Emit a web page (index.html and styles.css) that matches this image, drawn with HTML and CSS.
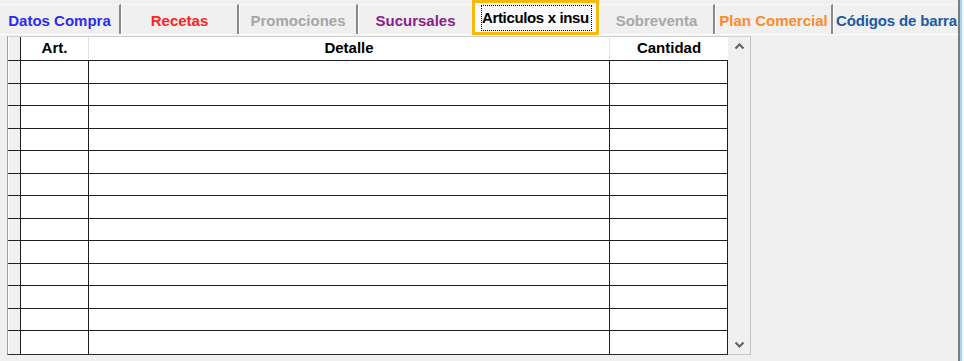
FILE: index.html
```html
<!DOCTYPE html>
<html>
<head>
    <meta charset="utf-8">
    <title>Artículos x insumo</title>
    <link rel="stylesheet" href="styles.css">
</head>
<body>
    <div class="window">
        <div class="page">
            <div class="tabs">
                <div class="tab tab-datos">Datos Compra</div>
                <div class="tab tab-recetas">Recetas</div>
                <div class="tab tab-promo">Promociones</div>
                <div class="tab tab-sucursales">Sucursales</div>
                <div class="tab tab-active"><span class="focus">Articulos x insu</span></div>
                <div class="tab tab-sobreventa">Sobreventa</div>
                <div class="tab tab-plan">Plan Comercial</div>
                <div class="tab tab-codigos">Códigos de barra</div>
            </div>

            <div class="grid-wrap">
                <div class="grid">
                    <div class="hrow">
                        <div class="rh"></div>
                        <div class="hc">Art.</div>
                        <div class="hc">Detalle</div>
                        <div class="hc">Cantidad</div>
                    </div>
                    <div class="row"><div class="rh"></div><div class="c"></div><div class="c"></div><div class="c"></div></div>
                    <div class="row"><div class="rh"></div><div class="c"></div><div class="c"></div><div class="c"></div></div>
                    <div class="row"><div class="rh"></div><div class="c"></div><div class="c"></div><div class="c"></div></div>
                    <div class="row"><div class="rh"></div><div class="c"></div><div class="c"></div><div class="c"></div></div>
                    <div class="row"><div class="rh"></div><div class="c"></div><div class="c"></div><div class="c"></div></div>
                    <div class="row"><div class="rh"></div><div class="c"></div><div class="c"></div><div class="c"></div></div>
                    <div class="row"><div class="rh"></div><div class="c"></div><div class="c"></div><div class="c"></div></div>
                    <div class="row"><div class="rh"></div><div class="c"></div><div class="c"></div><div class="c"></div></div>
                    <div class="row"><div class="rh"></div><div class="c"></div><div class="c"></div><div class="c"></div></div>
                    <div class="row"><div class="rh"></div><div class="c"></div><div class="c"></div><div class="c"></div></div>
                    <div class="row"><div class="rh"></div><div class="c"></div><div class="c"></div><div class="c"></div></div>
                    <div class="row"><div class="rh"></div><div class="c"></div><div class="c"></div><div class="c"></div></div>
                    <div class="row"><div class="rh"></div><div class="c"></div><div class="c"></div><div class="c"></div></div>
                </div>
                <div class="scrollbar">
                    <svg class="arrow" width="11" height="7" viewBox="0 0 11 7">
                        <path d="M1.5 5.5 L5.5 1.5 L9.5 5.5" fill="none" stroke="#606060" stroke-width="2"/>
                    </svg>
                    <svg class="arrow" width="11" height="7" viewBox="0 0 11 7">
                        <path d="M1.5 1.5 L5.5 5.5 L9.5 1.5" fill="none" stroke="#606060" stroke-width="2"/>
                    </svg>
                </div>
            </div>
        </div>
        <div class="edge"></div>
    </div>
</body>
</html>
```

FILE: styles.css
```css
body {
    margin: 0;
    background: #f0f0f0;
    font-family: 'Liberation Sans', Arial, sans-serif;
    font-size: 15px;
    font-weight: bold;
}

.window {
    display: flex;
    height: 361px;
    overflow: hidden;
}

.page {
    width: 958px;
    flex: 0 0 958px;
    overflow: hidden;
}

.edge {
    flex: 1;
    border-left: 2px solid #7c7c7c;
    box-shadow: inset 2px 0 0 #a9d3ef;
    background: #f4f4f4;
}

/* tabs */
.tabs {
    display: flex;
    align-items: flex-start;
    height: 35px;
    border-bottom: 1px solid #ffffff;
    box-sizing: border-box;
    white-space: nowrap;
}

.tab {
    box-sizing: border-box;
    height: 30px;
    margin-top: 4px;
    padding-top: 1px;
    display: flex;
    align-items: center;
    justify-content: center;
    border-top: 1px solid #f8f8f8;
    border-left: 1px solid #ffffff;
    border-right: 2px solid #8a8a8a;
    flex: 0 0 auto;
    overflow: hidden;
}

.tab-datos { width: 121px; color: #2b2bf2; border-left: none; }
.tab-recetas { width: 118px; color: #ff2222; }
.tab-promo { width: 119px; color: #a6a6a6; }
.tab-sucursales { width: 114px; color: #8c1e8c; border-right: none; }
.tab-sobreventa { width: 116px; color: #a8a8a8; }
.tab-plan { width: 118px; color: #ff8a28; }
.tab-codigos { width: 126px; color: #1d5aa6; justify-content: flex-start; padding-left: 2px; border-right: none; letter-spacing: -0.15px; }

.tab-active {
    width: 127px;
    height: 35px;
    margin-top: 0;
    padding-top: 0;
    border: 3px solid #f8b908;
    background: #fafafa;
    color: #000;
    justify-content: flex-start;
    padding-left: 6px;
}

.focus {
    display: block;
    width: 111px;
    border: 1px dotted #000;
    padding: 4px 0 4px 0;
    box-sizing: border-box;
    line-height: 16px;
    letter-spacing: -0.35px;
}

/* grid */
.grid-wrap {
    display: flex;
    margin: 1px 0 0 7px;
    width: 744px;
}

.grid {
    border-left: 1px solid #a0a0a0;
    border-top: 1px solid #d0d0d0;
    border-bottom: 1px solid #2a2a2a;
}

.hrow,
.row {
    display: grid;
    grid-template-columns: 13px 68px 521px 118px;
    box-sizing: border-box;
}

.hrow {
    height: 24px;
    border-bottom: 1px solid #1e1e1e;
}

.row {
    height: 22.5px;
    border-bottom: 1px solid #1e1e1e;
}

.row:last-child {
    border-bottom: none;
}

.rh {
    background: #f0f0f0;
    box-shadow: inset 1px 0 0 #ffffff;
    border-right: 1px solid #1e1e1e;
}

.hc {
    background: #ffffff;
    border-right: 1px solid #e2e2e2;
    color: #000;
    text-align: center;
    line-height: 22px;
}

.hc:last-child {
    border-right: none;
}

.c {
    background: #ffffff;
    border-right: 1px solid #1e1e1e;
}

.scrollbar {
    width: 23px;
    box-sizing: border-box;
    border-top: 1px solid #d0d0d0;
    border-right: 1px solid #c4c4c4;
    border-bottom: 1px solid #c4c4c4;
    background: #f0f0f0;
    display: flex;
    flex-direction: column;
    justify-content: space-between;
    align-items: center;
    padding: 6px 0 6px 0;
}

.arrow {
    display: block;
}
```
